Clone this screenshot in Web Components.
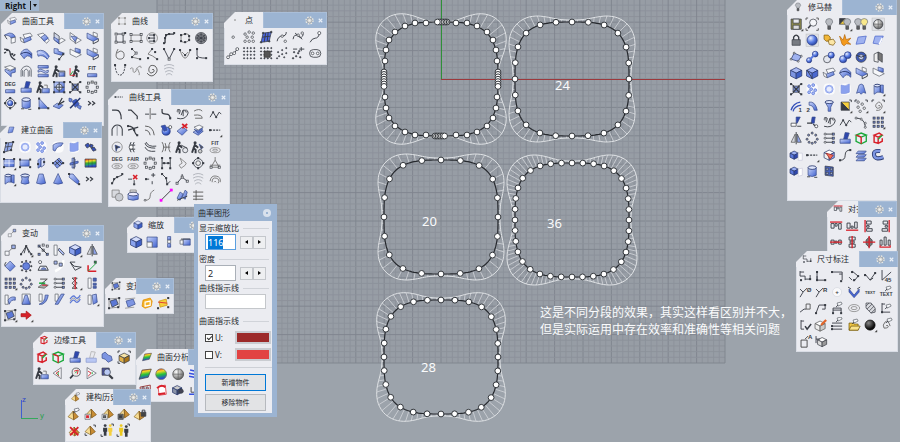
<!DOCTYPE html>
<html lang="zh-CN">
<head>
<meta charset="utf-8">
<title>Right</title>
<style>
html, body { height: 100%; margin: 0; }
body { background: #9ca3ab; font: 8px/12px "Noto Sans", "Noto Sans CJK SC", sans-serif; color: #25282d; overflow: hidden; }
</style>
</head>
<body>
<modeling-desktop>
  <view-tab slot="tab">Right</view-tab>
  <curve-view></curve-view>
  <view-note style="left:555px;top:76px">24</view-note>
  <view-note style="left:422px;top:212px">20</view-note>
  <view-note style="left:547px;top:214px">36</view-note>
  <view-note style="left:421px;top:358px">28</view-note>
  <view-note class="cn" style="left:540px;top:303px">这是不同分段的效果，其实这样看区别并不大，<br>但是实际运用中存在效率和准确性等相关问题</view-note>

  <tool-panel style="left:1px;top:13px;width:103px;--foot:13px" icon="chamfer" tools="fillet chamfer blend lsheet lsheet2 chair curveNodes fan fan2 chairDot chairGrey chair cubeFillet arch waves manTable manAxes fitBar degBar ledge manBox target xTarget ringNodes orbit cylinder setSquare planeDrop satellite more">曲面工具</tool-panel>
  <tool-panel style="left:0;top:122px;width:102px;--foot:14px" icon="patchSmall" tools="patch glowBall glowDots glowBend glowSheet diamonds rectPatch* rectDots foldPatch gridPatch crossPatch rainbow extrude* loft cone1 cone2 sweep more">建立曲面</tool-panel>
  <tool-panel style="left:111px;top:13px;width:102px" icon="polyRectG" tools="polyRect rectOpen spiralSq filletNodes arcNodes ballDark blob curveN1 curveN2 parab parabDots lcurve catenary wavesSmall spiral springs">曲线</tool-panel>
  <tool-panel style="left:224px;top:12px;width:103px;--tab:39px" icon="dot" tools="point manyPoints pointGrid ptCurve ptCurve2 ptCurve3 ptLine dotGrid dotGrid2 dotScatter dotCross twoEyes">点</tool-panel>
  <tool-panel style="left:108px;top:89px;width:122px;--cols:7;--side:6px" icon="dashLine" tools="filletArc chamferArc crossLine connect squig hook wiggle arch2 tangent offset bluePot redX blueLay dashLine* circArrow bead strands mirrorB manCircle manCircle2 fitRings degRings fairRings ringNodes bridge loopG orbit2 bag stepNodes delNode plusNode bendNode tripod springs rings union ringBase sCurve magenta blueTiles rails">曲线工具</tool-panel>
  <tool-panel style="left:1px;top:225px;width:103px" icon="move" tools="move copyA* array scaleBar cube* mirror rotate spin projectC softArc shear axes gridNine* circNodes flatten alignR twist* alignB bendL taper shearB shearC flowG copyT* cage* redArrow*">变动</tool-panel>
  <tool-panel style="left:127px;top:217px;width:84px;--cols:4;--side:17px" icon="cube" tools="cube scale2 scale1 scaleN">缩放</tool-panel>
  <tool-panel style="left:105px;top:278px;width:69px;--cols:4;--side:2px;--tab:31px" icon="cage" tools="cage cageBlue cageOr cageYel">变形</tool-panel>
  <tool-panel style="left:33px;top:332px;width:103px" icon="edgeR" tools="edgeR edgeG ledge ledge2 mergeB goldBox manBox triL zoomRG triR magnify">边缘工具</tool-panel>
  <tool-panel style="left:136px;top:349px;width:103px;--tab:52px" icon="rainbowTilt" tools="rainbowTilt rainbowBall greyBall stripes blank blank dots redSheet greyCyl uLine">曲面分析</tool-panel>
  <tool-panel style="left:65px;top:389px;width:86px;--cols:5;--side:2px;--tab:48px" icon="pyrTag" tools="pyrTag pyrRed pyrDark pyrBlack pyrLock pyrX pyrPick twoMen twoMen2">建构历史</tool-panel>
  <tool-panel style="right:3px;top:-1px;width:110px;--side:10px;--foot:21px" icon="bulb" tools="save* zoomExt bulb bulbHalf* bulbTwo ballDisplay lock ballBlue puzzle explode sheetB sheetTrim sheetDots linkBalls diffBalls uniBalls ringCube extrDark cubeB cubeB2 chamfer fan chair chairGrey xTarget glowDots glowBall glowSheet cone3 extrude* curve1 curve2 funnel halfBlack* dotsSel* spiralSel* trimB splitB squig wiggle filletR gridNine* mirror circNodes alignR ledge edgeG edgeR boxFade dashLine* redOrb sCurve2 layers pipe boxFade2 cylinder cubeHole">修马赫</tool-panel>
  <tool-panel style="right:3px;top:201px;width:70px;--cols:4;--side:3px;--tab:31px" icon="alT" tools="alT alBt alL alR alH alV alC alD">对齐</tool-panel>
  <tool-panel style="right:2px;top:251px;width:102px" icon="dim1" tools="dim1 dimV dimH dimA dimA2 dim45 dimO dimR dimC dimBlue txt txtLead leader leader2 leadTag cloud hatch dimTag dimCheck cubePen dimList folder ballBlack* spiralTag tagA tagCube">尺寸标注</tool-panel>
  <axis-mark></axis-mark>
  <curvature-dialog style="left:194px;top:204px"></curvature-dialog>
</modeling-desktop>

<script>
/* ---------- icon library: every glyph sits in a 16 x 16 box ---------- */
const K = '#383c44';
const p = (d, c = K, w = .9) => `<path d="${d}" fill="none" stroke="${c}" stroke-width="${w}"/>`;
const f = (d, c = 'url(#b)', s = '#3a4d8c') => `<path d="${d}" fill="${c}" stroke="${s}" stroke-width=".7" stroke-linejoin="round"/>`;
const w = d => f(d, '#f6f7fa', '#5f646c');
const pts = s => s.split(',').map(v => v.trim().split(' ').map(Number));
const n = (s, c = '#fff', k = K) => pts(s).map(([x, y]) => `<rect x="${x - 1}" y="${y - 1}" width="2" height="2" fill="${c}" stroke="${k}" stroke-width=".7"/>`).join('');
const nd = s => pts(s).map(([x, y]) => `<rect x="${x - 1}" y="${y - 1}" width="2" height="2" fill="${K}"/>`).join('');
const o = (s, r = 1.3, c = '#fff', k = K) => pts(s).map(([x, y]) => `<circle cx="${x}" cy="${y}" r="${r}" fill="${c}" stroke="${k}" stroke-width=".7"/>`).join('');
const el = (x, y, a, b, c = 'none', k = K) => `<ellipse cx="${x}" cy="${y}" rx="${a}" ry="${b}" fill="${c}" stroke="${k}" stroke-width=".8"/>`;
const t = (s, x = 8, y = 7, z = 5) => `<text x="${x}" y="${y}" font-size="${z}" text-anchor="middle" fill="${K}">${s}</text>`;
const R = '#d8202a', G = '#18a838', Y = '#f6cf3c';
const ball = (x, y, r, c = 'url(#s)') => o(`${x} ${y}`, r, c, '#2a3c86');
const cub = (x, y, s, A = '#d3dcfa', B = '#8aa3ee', C = '#3f5fc4', k = '#26356b') => {
  const h = s / 2, q = s / 4;
  return f(`M${x - h} ${y - q}L${x} ${y - h} ${x + h} ${y - q} ${x} ${y}Z`, A, k) + f(`M${x - h} ${y - q}L${x} ${y}V${y + h}L${x - h} ${y + q}Z`, B, k) + f(`M${x} ${y}L${x + h} ${y - q}V${y + q}L${x} ${y + h}Z`, C, k);
};
const man = (x = 0, c = K) => `<g transform="translate(${x} 0)"><circle cx="6" cy="3.6" r="1.5" fill="${c}"/>${p('M6 5L4.5 9 6.5 10.5V14M4.5 9L3 13.5M6 6L9 8.5', c, 1.9)}</g>`;
const stand = (x, c, y = 0) => `<g transform="translate(${x} ${y})"><circle cx="0" cy="3.5" r="1.4" fill="${c}"/><path d="M-2 5.500H2V9.500H1.300V13.500H-1.300V9.500H-2Z" fill="${c}"/></g>`;
const bar = f('M3.500 10.500H12.500V13.500H3.500Z');
const chairA = f('M3 3V8L9 11 14 8.500 9 6Z') + w('M9 2L13 3.500V7L9 5.500Z') + p('M9 11V13.500L14 11V8.500');
const pyr = (x = 0, y = 0) => `<g transform="translate(${x} ${y})">${f('M8 5L3 10.500 8.500 13.500Z', '#f7dc93', '#8a6a2a')}${f('M8 5L13 10.500 8.500 13.500Z', '#c98d34', '#7a5418')}</g>`;
const rainb = d => f(d, 'url(#r)', '#444');
const glow = s => `<g><rect x="2.500" y="2.500" width="11" height="11" rx="4" fill="#fff" opacity=".8"/>${s}</g>`;
const bulb = (x, c = '#b9bcc2') => f(`M${x - 3.5} 6A3.500 3.500 0 1 1 ${x + 3.5} 6Q${x + 2} 8 ${x + 1.5} 9.500H${x - 1.5}Q${x - 2} 8 ${x - 3.5} 6Z`, c, '#73777e') + f(`M${x - 1.3} 10H${x + 1.3}V13H${x - 1.3}Z`, '#5b5f66', '#444');
const brackets = p('M2 4V2H4M12 2H14V4M2 12V14H4', K);
const tag = (x, y) => `<g transform="translate(${x} ${y})">${w('M1 1L5 0 6 2 2 4Z')}${p('M0 5L2 3')}</g>`;
const orbit = el(8, 8, 4.5, 4.5, 'none') + nd('8 3,8 13,3 8,13 8');
function row4(y) { return o(`3 ${y},6.300 ${y},9.600 ${y},13 ${y}`, .6, K); }

const icons = {
  blank: '', more: p('M4 6L6.500 8 4 10M8 6L10.500 8 8 10', K, 1.200), dot: o('8 8', .8, '#aaa', '#888'),
  fillet: f('M2.500 5 7 3Q12 3 13 7L9 8Q8 5 2.500 5Z') + w('M9 8 13 7V12L9 13Z') + p('M2.500 5Q4 8 5 9'),
  chamfer: w('M5 4.500L12 3 14 6 7 8.500Z') + f('M5 9L12 6.500 13 9.500 6 12.500Z') + w('M2 7L5 9 6 12.500 3 11Z'),
  blend: w('M2.500 4.500L8 3 14 10 11.500 13Z') + f('M6 7L10 4.500 13 8 9 11Z'),
  lsheet: f('M3 2.500L8 6V13.500L3 9.500Z', '#cfd5e6', K) + f('M3 7L8 10V13.500L3 9.500Z') + w('M8 13.500L14 10 10.500 8 8 9.500Z'),
  lsheet2: w('M3 2.500L8 6V12.500L3 9Z') + f('M4 6L10 7 8.500 12Z') + w('M8 13.500L14 10 10.500 8 9 9.500Z'),
  chair: chairA, chairDot: f('M3 2.500V7L10 9 13 7 7 5V3Z') + nd('12 8,8 13') + p('M12 8L8 13'), chairGrey: w('M3 3V8L9 11 14 8.500 9 6Z') + f('M8 2L13 3.500V7L8 5.500Z'),
  curveNodes: p('M2 3Q8 3 8 7T13 13.500M4 6L2 7M11 10L13 8', K, 1.300) + nd('5 4,10 8'),
  fan: f('M2.500 8Q4 3 9 3L13.500 7V12Q9 7 6 12.500Z') + p('M2.500 8Q8 4 13.500 9', '#26356b'),
  fan2: f('M2 5Q9 2 14 10L12 13Q8 8 3 10Z') + p('M2 7Q9 5 13 12', '#d7defa'),
  cubeFillet: w('M2.500 4L8 2.500 13.500 5 8 7Z') + f('M3 6L8 8 13 5.500V9L9 10V13.500L3 8Z'),
  arch: p('M3 13.500V7Q5 3 8 3Q12 3 13 7V13.500M6 13.500V8Q8 4 10 8V13.500M4.500 13V7M11.500 13V7', '#6b707a', .9),
  arch2: p('M3 13.500V7Q5 3 8 3Q12 3 13 7V13.500', K, 1) + p('M8 3V13.500', '#8a8f98'),
  waves: f('M3 2.500H13V5H3Z') + f('M3 7Q6 5 8 7T13 7V9Q10 11 8 9T3 9Z', '#b9c7f4') + f('M3 11H13V13.500H3Z'),
  manTable: man(-1) + p('M8 8H13.500V13.500M8 13.500V10') + f('M8 9.500H13V13H8Z'),
  manBox: man(-1) + f('M7 9.500H14V13.500H7Z') + p('M9 6H12V9', '#777'),
  manAxes: man(3) + p('M3 5V12H8', R) + p('M3 12L6 8', G),
  manCircle: man(-1) + o('11 11', 2.5, '#e5e7ec') + p('M7 6L13 9'), manCircle2: man(-1) + o('10 12', 1.8, '#ccc') + f('M9 5L13 8 11 10Z', '#555'),
  fitBar: t('FIT') + bar, degBar: t('DEG') + bar,
  fitRings: t('FIT', 8, 6, 5) + el(8, 11, 5, 2.5, 'none', '#888') + el(8, 11, 2.5, 1, 'none', '#888'),
  degRings: t('DEG', 8, 6, 5) + el(8, 11, 5, 2.5, 'none', '#888') + el(8, 11, 2.5, 1, 'none', '#888'),
  fairRings: t('FAIR', 8, 6, 5) + el(8, 11, 5, 2.5, 'none', '#888') + el(8, 11, 2.5, 1, 'none', '#888'),
  ledge: f('M8 2.500L12 3 10 9H6.500Z', '#2e47ae') + f('M3 9H13V13H3Z'), ledge2: f('M8 2.500L12 3 10 9H6.500Z', '#e8e9ee', '#aaa') + f('M3 9H13V13H3Z', '#b9c7f4', '#8c9bd0'),
  target: f('M3 3H13V13H3Z') + o('8 8', 3, '#dfe6fc') + p('M8 3V13M3 8H13') + nd('3 3,13 3,3 13,13 13'),
  xTarget: p('M3 3L6 5M13 3L10 5M3 13L6 11M13 13L10 11') + f('M5 5H11V11H5Z', '#7d94dc', K) + p('M5 5L11 11M11 5L5 11', K, 1.300) + nd('3 3,13 3,3 13,13 13'),
  ringNodes: n('8 3,4.500 4,11.500 4,3 8,13 8,4.500 12,11.500 12,8 13') + p('M6 4Q8 2 10 4', '#888'),
  orbit: orbit + ball(8, 8, 2.6), orbit2: orbit + o('8 8', 2.3, '#eee'),
  cylinder: f('M4 4.500V12Q8 14.500 12 12V4.500Z') + el(8, 4.5, 4, 1.8, '#dfe6fc', '#26356b') + p('M3 13.500H6M10 14H13'),
  setSquare: f('M4 3.500V13H13Z') + nd('4 3.500,4 13,13 13'),
  planeDrop: f('M2 11L6 8 12 10 8 13.500Z') + p('M7 10L11 3M8 9L13 6', K, 1.200),
  satellite: f('M5 6L9 4 12 9 8 12Z', '#3c59c4') + f('M2 3L5 4 4 7 2 6Z', '#6d88e0') + f('M11 10L14 11 13 14 10 12Z', '#6d88e0') + p('M3 13L13 3', '#26356b', 1.500),
  patch: f('M5 4L12 3 10 11 3 13Z', '#93a8ea', K) + p('M7.500 4L6 12M4 8L11 7', K, .7) + nd('5 4,12 3,10 11,3 13'),
  patchSmall: f('M6 4L12 4 10 11 4 12Z'),
  glowBall: glow(o('8 8', 3.8, '#e8edfd', '#6f8ae6') + o('8 8', 3, 'none', '#88a0f0')),
  glowDots: glow(o('5 5,9 4,7 8,11 9,5 11,9 12', 1.4, '#a9bbf4', '#5a76d8')),
  glowBend: glow(f('M3 6Q7 3 13 4L11 7Q7 7 5 12L3 11Z')), glowSheet: glow(f('M4 4Q8 6 12 3L12 11Q8 13 4 12Z', '#8ba1ee', '#7f95e0')),
  diamonds: f('M3 6L6 4 8 7 5 9ZM8 5L11 6 10 9 8 8ZM9 9L12 8 14 11 11 12Z', '#3550b8', K),
  rectPatch: f('M3 4.500H13V11.500H3Z') + p('M8 4.500V11.500M3 8H13', '#fff', .7) + nd('3 4,13 4,3 12'),
  rectDots: f('M3 5H12V11H3Z') + nd('3 4.500,13 4.500,3 12,13 12'),
  foldPatch: f('M5 5L8 3V11L5 13Z') + f('M8 5L11 3V10L8 12Z', '#dbe3fc') + nd('5 9,11 7'),
  gridPatch: f('M3 8L9 3 13 8 7 13Z', '#7d95e2') + p('M5 6L10 11M7 4L12 9M5 10L11 5') + nd('3 8,13 8'),
  crossPatch: f('M6 3L9 4V12L6 13Z', '#a9b9ee') + f('M4 8L12 6V8L4 10Z', '#5f7ad6') + p('M8 2V14'),
  rainbow: rainb('M3 4H14V12H3Z') + p('M3 8H14M6.500 4V12M10 4V12', '#3338', .6),
  extrude: f('M4 5Q7 2 10 4L13 4V12L10 11Q7 10 4 13Z') + p('M10 4V11', '#26356b') + el(7, 4.5, 3, 1.3, '#dfe6fc', '#26356b'),
  loft: f('M4 4Q8 2 12 4L11 8 12 12Q8 14 4 12L5 8Z') + el(8, 4.5, 4, 1.5, '#dfe6fc', '#26356b'),
  cone1: f('M6 3H10L12.500 12Q8 14 3.500 12Z'), cone2: f('M8 2.500L12.500 12Q8 14 3.500 12Z'), cone3: f('M6 4Q8 2 10 4L12.500 12 10 11 8 13 6 11 3.500 12Z'),
  sweep: f('M4 3L7 3 13 10 12 13 9 11 3 6Z') + nd('13 13,3 3'),
  polyRect: p('M4 4H11V12H4V6', K) + n('4 4,11 4,4 12,12 12') + nd('13 3'), polyRectG: p('M4 4H12V12H4Z', '#999', .7) + n('4 4,12 4,4 12,12 12', '#fff', '#888'),
  rectOpen: p('M3 5H13V11H3Z', '#777') + n('3 4.500,13 4.500,3 11.500,13 11.500'),
  spiralSq: o('8 8', 5.3, 'none', '#777') + p('M5 5H10V11H5M6 8H11', K) + nd('10 5,10 11,5 8'),
  filletNodes: p('M4 13V10Q4 4 8 4H13', K, 1.300) + nd('13 3,8 4,4 8,3 13,5 5'),
  arcNodes: p('M4 11V6Q8 2 12 5V10Q8 14 4 11', '#777') + nd('4 5,8 4,12 6,12 10,8 12,4 11'),
  ballDark: o('8 8', 5.5, '#8b8e94') + p('M3 8H13M8 3V13M4 5L12 11M12 5L4 11', K, .8) + o('8 8', 3.5, 'none'),
  blob: p('M6 3Q4 6 4 9Q4 13 8 13Q12 13 12 9Q12 5 8 5L5 7', '#666'),
  curveN1: p('M4 3L8 7 4 11 12 13', '#777') + nd('4 3,4 11,12 13') + n('8 7'), curveN2: p('M8 3L4 8Q8 9 13 13', '#777') + nd('8 3,11 6,4 12,13 13'),
  parab: p('M3 3L8 13 13 3') + nd('3 3,13 3') + n('8 13'), parabDots: p('M3 4Q8 20 13 4M5 6L8 9 11 6', '#777') + nd('3 4,8 9,13 4'),
  lcurve: p('M4 3V9Q4 12 13 12') + nd('4 3,4 12,13 12'),
  catenary: `<g stroke-dasharray="2 1">${p('M3 3Q4 13 8 13T13 3')}</g>` + nd('3 3,13 3'),
  wavesSmall: p('M2 7Q5 4 5 8T8 9Q8 4 10 8T11 13M9 6Q13 2 13 6', '#888'),
  spiral: p('M8 8Q9 6 10 8T7 11Q4 10 5 6T11 4Q15 8 11 12T3 11', '#555'),
  springs: p('M3 4Q8 1 13 4M3 7Q8 4 13 7M4 10Q8 7 12 10M5 13Q8 10 11 13', '#a6aab2', .8),
  point: o('8 8', 1.2), manyPoints: o('4 5,8 3,12 4,6 8,11 8,4 12,8 12,12 12', 1.2),
  pointGrid: f('M5 4L13 3 11 12 3 13Z', '#4a66e0', K) + p('M7.500 4L6 13M10 3L9 12M4 8L12 7') + o('5 4,13 3,11 12,3 13', .8, K),
  ptCurve: p('M3 12Q4 7 8 7T12 3') + o('8 7,11 12', 1.2), ptCurve2: p('M3 10Q4 4 8 7T13 5M5 4L12 10') + o('8 6,12 4', 1.2), ptCurve3: p('M3 13Q5 9 8 9T12 5') + o('12 4', 1.5),
  ptLine: p('M3 12L6 9 9 8 12 4') + o('3 12,6 9,9 8,12 4', 1.4),
  dotGrid: [3, 6.3, 9.6, 13].map(row4).join(''), dotGrid2: [3, 6.3, 9.6, 13].map(row4).join('') + f('M6 6H12V12H6Z', '#555', '#333'),
  dotScatter: o('4 7,8 5,12 3,5 11,8 9,10 12,3 13,12 8', .6, K), dotCross: o('4 7,8 8,6 11,10 12,3 13,9 6', .7, K) + p('M3 4H7M9 4H14M11 2V6'),
  twoEyes: `<rect x="2.500" y="4.500" width="11" height="7.500" rx="3.700" fill="none" stroke="${K}" stroke-width=".8"/>` + o('5.500 8.200,10.500 8.200', 1.3),
  filletArc: p('M3 4H7Q12 4 12 13', K, 1.200), chamferArc: p('M3 4H6L12 10V13', K, 1.200), crossLine: p('M3 8H7M9 8H14', K) + p('M8 2V13', '#666'), connect: p('M4 3V6Q4 8 8 8T12 13', K, 1.200) + nd('12 12'),
  squig: p('M3 12Q10 14 13 9T9 4L7 9M3 4Q8 2 5 8M9 4V10') + o('4 5,12 5', 1, '#fff'),
  hook: p('M4 5Q9 2 12 5M4 9Q12 8 12 12H5', '#666'), wiggle: p('M3 11L6 6 9 11 12 6 14 8') + o('6 6,9 11', .7, K),
  tangent: p('M3 4Q8 4 9 8T12 13M3 8L13 5', K, 1.100) + nd('3 4,9 8,12 13'), offset: p('M3 4Q11 4 12 13M3 8Q7 8 8 13', '#555'),
  bluePot: ball(8, 9, 4) + f('M3 4L7 3 9 8 6 9Z', '#3550b8') + o('12 5', 1.5), redX: f('M3 9L8 5 13 8 8 13Z') + p('M8 2L13 6M13 2L8 6', R, 1.800),
  blueLay: f('M3 10L8 7 13 9 8 13Z') + w('M4 5L9 3 13 5 8 8Z') + f('M4 7L8 9 12 6 12 8 8 11Z', '#5b78dc'),
  dashLine: `<g stroke-dasharray="2 1">${p('M3 8H13', K, 1.200)}</g>` + nd('3 8'),
  circArrow: o('8 8', 5, 'none', '#777') + f('M6 6L11 8 8 9 7 12Z', K), bead: p('M6 3Q3 8 6 13M9 3Q6 8 9 13M5 6H10M5 10H10') + o('6 8', 2), strands: p('M3 4Q4 9 13 9M4 3Q6 8 14 7M3 8Q5 13 13 12'), mirrorB: p('M4 3Q7 8 4 13M12 3Q9 8 12 13M7 4Q9 8 7 12M5 8H12', '#666'),
  bridge: p('M4 3V13M12 3V13M4 8H12') + nd('4 3,4 13,12 3,12 13,6 8,10 8'), loopG: p('M6 3L12 8 11 10 7 13 5 10 8 8Z', '#888'), bag: p('M8 2V5M8 5L4 12H12L8 5M3 10H13', '#777') + n('4 12,12 12'),
  stepNodes: p('M3 13L5 8 8 6 13 4') + nd('3 12,5 8,8 6,13 3'), delNode: p('M3 8H7M9 12V9') + nd('9 13') + p('M8 4L12 8M12 4L8 8', R, 1.500), plusNode: p('M3 8H7M11 2V6M9 4H13M10 13V10') + nd('4 8'), bendNode: p('M4 3L8 7 9 13M12 10L9 13') + nd('4 3,8 7,9 13'), tripod: p('M3 12L8 6 13 10M8 6V3') + n('3 12,8 6,13 10'),
  rings: p('M3 10Q4 4 9 5T13 11M5 11Q5 6 9 7T11 12M7 11Q8 9 9 11', '#777'),
  union: f('M3 3H10V10H3Z', '#d8dadf', '#777') + o('10 10', 3.8, '#c9ccd2', '#777'), ringBase: f('M3 7L13 7V12Q8 14 3 12Z') + el(8, 7, 5, 1.8, '#eef', '#26356b') + p('M5 3H11V5H5Z', '#888'), sCurve: p('M3 13Q8 13 8 9T12 3', '#777') + o('3 13', .9), sCurve2: p('M3 13Q8 13 8 8T13 3') + nd('3 13,13 3'),
  magenta: p('M3 13L13 3', '#333', .9) + n('3 13,13 3', '#f0f', '#f0f'), blueTiles: f('M3 11L6 5 9 7 6 13Z') + f('M8 10L11 3 13 5 11 12Z') + p('M3 13L13 9'), rails: p('M6 3V13M3 5H13M3 9H13M3 12H13', '#555'),
  move: w('M3 9H7V13H3Z') + f('M9.500 3H13V6.500H9.500Z', '#9db0ea', K) + p('M7 9L9.500 6.500', '#777'), copyA: p('M8 4L3 12M8 4L13 12M8 4L6 11M8 4L11 11') + nd('8 4,3 12,13 12'),
  array: n('4 4,4 12,12 12', '#7d95e2') + n('8 8,12 4,8 3') + p('M4 4L12 12'), scaleBar: w('M3 3H6V13H3Z') + f('M8 6L13 11 12 13 7 8Z', '#a9b9ee', K), cube: cub(8, 8, 11), mirror: f('M3 12L7 4V12Z', '#d6d9e0', '#555') + f('M9 4L13 12H9Z', '#8ea4ea', '#444') + p('M8 2V14', K),
  rotate: f('M3 8L8 3 13 8 8 13Z') + p('M4 4Q2 6 3 8'), spin: ball(8, 8, 3.5, '#6681dc') + o('4 4,12 4,3 8,13 8,4 12,12 12,8 3,8 13', .7, K), projectC: p('M3 12H13L11 8H5Z') + o('5 4', 1.5) + f('M6 11Q8 8 11 11Z'), softArc: p('M12 2Q13 9 4 13', '#fff', 2.500) + f('M3 3H6V6H3ZM8 5H11V8H8Z', '#a9b9ee', K),
  shear: p('M3 4L8 12 14 9 7 8Z') + p('M3 4H8'), axes: p('M4 13V7M4 13H12', R, 1.500) + p('M4 13L12 5', G) + n('11 4', G),
  gridNine: [4, 8, 12].map(y => n(`4 ${y},8 ${y},12 ${y}`, '#6f87dc')).join(''), circNodes: o('8 3,4.500 5,11.500 5,3 9,13 9,5 12,11 12,8 13', 1, '#8fa4ea', '#333'),
  flatten: f('M3 12L7 9 13 10 9 13Z', '#aaa', '#555') + p('M4 8H10', G, 1.500) + p('M5 4H12L7 8', '#444') + p('M7 10H12', R), alignR: p('M4 4H12M4 8H12M4 12H12') + n('12 4,12 8,12 12', '#7d95e2') + o('4 4,4 8,4 12', 1),
  twist: p('M5 3H10L5 8 10 13H5L10 8Z', '#444') + p('M8 2V14', R, 1.200), alignB: w('M4 3H7V13H4Z') + f('M9 3H12V6H9ZM9 8H12V10H9ZM9 11H12V13H9Z', '#4a63b4'), bendL: w('M3 4H6V13H3Z') + f('M6 9Q8 5 13 6V9Q9 8 7 13Z'), taper: w('M4 3H12V13H4Z') + f('M7 4H9L12 13H4Z'),
  shearB: w('M4 3H7V10H4Z') + f('M10 4H13Q12 11 7 13H4Q10 11 10 4Z'), shearC: w('M4 3H7V10H4Z') + f('M10 3H13L7 13H4Z'), flowG: p('M3 8Q6 3 8 6T13 4M3 12Q6 7 8 10T13 8', '#5f7ad6', 1.300) + p('M3 10Q6 5 8 8T13 6', '#999'), copyT: w('M4 4H7V13H4Z') + f('M8 4L12 3 13 11 9 13Z'),
  cage: f('M4 6L10 4 12 9 6 12Z', '#5c78d4', K) + p('M3 4L13 3M3 13L12 12M3 4V13M13 3V12', '#777', .7) + nd('3 4,13 3,3 13,12 12'), cageBlue: f('M4 6L11 4 13 9 6 12Z', '#7d95e2') + p('M3 4L13 3M3 13L12 12', '#999'),
  cageOr: f('M4 5L11 3 13 6 12 11 6 13 3 11Z', '#f4b224', '#e08a00') + p('M6 7L11 6V10L6 11Z', '#fff', 1.200), cageYel: f('M4 6L11 4 12 10 5 12Z', Y, '#c79514') + p('M3 7L12 8', '#d33') + nd('13 3,3 13,13 12'),
  redArrow: f('M3 6.500H8V4L13 8 8 12V9.500H3Z', R, '#a11'), scale2: f('M3 3H13V13H8V8H3Z') + w('M3 8H8V13H3Z'), scale1: f('M6.500 2.500H9.500V6H6.500Z') + w('M6.500 6H9.500V9H6.500Z') + f('M6.500 9.500H9.500V13H6.500Z'), scaleN: f('M6 5H13V11H6Z') + w('M3 6H6V10H3Z') + p('M4 5H13'),
  edgeR: p('M4 5L9 3 12 5 8 7ZM4 5V12L8 13V7M8 13L12 11V8', R, 1.400) + p('M8 9L12 5', G, 1.200), edgeG: p('M3 5L8 3 13 5 8 7ZM3 5V11L8 13.500 13 11V5', G, 1.300) + p('M8 7V13.500M3 5L8 7', R, 1.400),
  mergeB: f('M3 5L6 3 9 6 12 7 13 11 9 13 6 10 3 9Z', '#7d95e2'), goldBox: cub(8, 9, 10, '#f6e3a6', '#e0b04a', '#a87418', K) + brackets, triL: w('M11 2.500V13.500L3 8Z') + p('M9 6L6 8 9 11', R) + p('M8 7V10', G), triR: w('M4 2.500V13.500L13 8Z') + p('M5 6L8 8 5 11', R) + p('M9 7V9', G),
  zoomRG: o('9 7', 4, '#eee') + p('M7 6L11 5 10 9', R) + p('M8 8L10 6', G) + p('M6 10L3 13', K, 1.800), magnify: f('M3 3H10V10H3Z', '#4a50a0', K) + o('8 7', 3.2, '#b9c9f4') + p('M10 10L13.500 13.500', K, 2.200),
  rainbowTilt: rainb('M5 4L14 3 11 11 2 13Z'), rainbowBall: o('8 8', 5.3, 'url(#r)', '#666'), greyBall: o('8 8', 5.3, 'url(#k)', '#444') + p('M3 8H13M8 3V13', '#555', .6), stripes: p('M4 4L14 6M3 7L13 9M3 10L13 12', '#3550e0', 1.500),
  dots: p('M3 5L13 3V12L4 13Z', '#933') + o('6 6,10 6,8 10', 1.2, '#e9a'), redSheet: f('M5 5L12 3 13 12 6 13Z', '#fff', R) + p('M4 6Q8 2 12 5M5 12L12 11', R, 2), greyCyl: cub(7, 8, 9, '#ccc', '#8a93a8', '#3c4660') + o('11 9', 2, '#445'), uLine: p('M3 12H13', '#3550e0', 1.500) + p('M5 5V10H9V4', '#444'),
  pyrTag: pyr(-1) + tag(7, 2), pyrRed: pyr(1, -2) + w('M3 8H8V13H3Z') + n('5.500 10.500', R, R), pyrDark: pyr(1, -2) + w('M3 8H8V13H3Z') + n('5.500 10.500', '#666'), pyrBlack: pyr(1, -2) + f('M3 8H8V13H3Z', '#777', K) + n('5.500 10.500', K), pyrLock: pyr(-1, 0) + f('M9 6H13.500V10H9Z', '#444', K) + p('M10 6V4H12.500V6'),
  pyrX: pyr() + p('M4 5L12 13M12 5L4 13', R, 1.800), pyrPick: pyr(0, -1) + p('M3 11V13H5M11 3H13V5'), twoMen: stand(6, K) + stand(11, Y) + p('M2 12V14H4M12 2H14V4'), twoMen2: stand(6, '#ecc81e') + stand(11, K, 1) + p('M2 12V14H4M12 2H14V4'),
  bulb: bulb(8), bulbHalf: f('M2.500 2.500H8L2.500 8Z', K, K) + f('M8 2.500V8H2.500Z', Y, K) + bulb(10), bulbTwo: bulb(5) + bulb(11, '#f8e88c'), save: f('M3 3H13V13H3Z', '#8d8a4a', K) + f('M5 3H11V7H5Z', '#e8e9ec', K) + f('M5 9H11V13H5Z', '#ddd', K), zoomExt: o('9 6.500', 3.5, '#f5f6f9') + p('M6.500 9L4 12', K, 1.500) + p('M2 4V2H4M12 2H14V4M2 12V14H4M12 14H14V12', '#555'),
  ballDisplay: `<rect x="2" y="2" width="12" height="12" fill="#dfe1e6" stroke="#bbb" stroke-width=".5"/>` + o('8 8', 4.6, 'url(#k)') + p('M8 3V13M3.500 8H12.500', '#555', .6), lock: p('M5.500 8V5Q8 1 10.500 5V8', K, 1.300) + f('M4 7.500H12V13H4Z', '#777b82', K), ballBlue: `<rect x="2" y="2" width="12" height="12" fill="#dfe1e6" stroke="#bbb" stroke-width=".5"/>` + ball(8, 8, 5),
  puzzle: f('M3 3H7L9 5V9H5L3 7Z', '#f2b83a', '#805a10') + f('M7 8L12 7 14 10 12 13 8 12Z', '#fbe6a6', '#805a10'), explode: f('M2.500 4L6 8 7.500 2.500 9 7.500 13.500 6 10.500 9.500 13.500 12 9 11.500 7 13.500 5 12Z', '#f49a1c', '#b86a10'),
  sheetB: f('M5 5L13 4 11 11 3 12Z', '#9fb2f0', '#4c66c8'), sheetTrim: f('M5 4L13 4 11 9 9 12 3 11Z', '#9fb2f0', '#4c66c8') + p('M9 12L12 6', '#fff', 1.500), sheetDots: f('M6 4L13 7 10 12 3 10Z', '#9fb2f0', '#26356b') + o('6 4,13 7,10 12,3 10', .9),
  linkBalls: ball(5, 11, 2.5) + ball(11, 5, 2.8) + p('M6 10L10 6', '#5b78dc', 2), diffBalls: o('6 10', 3.5, '#e3e6ee') + ball(10, 6, 3), uniBalls: ball(6, 10, 3.5) + ball(10.5, 6, 3.3), ringCube: o('8 8', 5, '#3c59b8') + o('8 8', 2.5, '#c9d3f5') + p('M3 6L8 8 13 6', K), extrDark: f('M4 5L8 3V13L4 12Z', '#eee', K) + f('M8 3L12 5V13L8 10Z', '#777', K),
  cubeB: cub(8, 8, 11, '#aabaf2', '#7d95e2'), cubeB2: cub(8, 8, 11, '#9eb2f4', '#6f8ae6', '#4a68cf') + p('M3 5L8 13'), curve1: p('M3 12Q5 5 12 4M5 13Q6 8 13 7', '#3550b8', 1.300) + t('1', 12, 13.5, 6), curve2: f('M5 4Q11 3 13 12L10 12Q9 7 5 7Z') + t('2', 4, 13.5, 6), funnel: f('M4 4Q8 2 12 4L9.500 9V13L7 13V9Z') + el(8, 4, 4, 1.5, '#dfe6fc', '#26356b'),
  halfBlack: f('M4 4H12V12Z', Y, K) + f('M4 4V12H12Z', K, K) + p('M12 2H14V4'), dotsSel: o('5 4,9 6,5 9,11 10,7 13', 1.2) + p('M2 4V2H4M12 2H14V4'), spiralSel: p('M8 8Q9 6 10 8T7 10Q4 8 7 5T12 8Q11 13 6 12', '#777') + p('M2 4V2H4M12 2H14V4'),
  trimB: f('M8 3L12 3 9 9H8Z', '#2e47ae') + f('M3 9H8V12H3Z', '#fff', K) + p('M9 12H13'), splitB: f('M8 3L11 3 10 9H7Z', '#2e47ae') + p('M3 9H8M9 10L13 13', K, 1.300) + o('12 12', 1.5), filletR: p('M3 4Q11 4 12 12') + o('3 4,8 5,12 9,12 13', 1),
  boxFade: cub(6, 8, 8, '#9eb2f4', '#5b78dc', '#2e47ae') + f('M10 6H14V13H10Z', '#fafbfd', '#ccd'), boxFade2: cub(6, 8, 8, '#9eb2f4', '#5b78dc', '#2e47ae') + f('M10 6L14 5V12L10 13Z', '#fff', '#ccd'), redOrb: cub(8, 8, 10, '#fff', '#eee', '#8aa3ee') + f('M5 6L12 8 9 12Z', '#f2705a', '#922'), layers: f('M5 4H13L11 6.500H3Z') + f('M5 7.500H13L11 10H3Z') + f('M5 11H13L11 13.500H3Z'), pipe: p('M10 4Q3 3 4 8T13 10', '#26356b', 4) + p('M10 4Q3 3 4 8T13 10', '#7d95e2', 2.400), cubeHole: f('M4 3L12 4V13L4 12Z', '#4a66c8', K) + n('6 6,10 6,6 10,10 10', '#b9c7f4'),
  alT: p('M2 4H14', R, 1.300) + p('M3 5.500H6V10H3ZM7 5.500H9V8H7ZM10.500 5.500H13V11H10.500Z'), alBt: p('M2 12H14', R, 1.300) + p('M3 5H6V10H3ZM7 8H9V10H7ZM10.500 4H13V10H10.500Z'), alL: p('M4 2V14', R, 1.300) + p('M5.500 3H10V6H5.500ZM5.500 7.500H8V9H5.500ZM5.500 10.500H11V13H5.500Z'), alR: p('M12 2V14', R, 1.300) + p('M6 3H10.500V6H6ZM8 7.500H10.500V9H8ZM5 10.500H10.500V13H5Z'),
  alH: p('M3 6H6V10H3ZM7 7H9V9H7ZM10.500 6H13V10H10.500Z') + p('M2 8H14', R, 1.300), alV: p('M5 3H11V6H5ZM6 7H10V9H6ZM5 10H11V13H5Z') + p('M8 2V14', R, 1.300), alC: f('M8 3L11 6V10L8 13 5 10V6Z', '#777', K) + p('M2 8H14M8 2V14', R, 1.300), alD: p('M3 6H5V11H3ZM7 3H9V11H7ZM11 6H13V11H11Z') + p('M3 11V13H13V11', R, 1.200),
  dim1: p('M3 3V8H8V12M3 4H7M8 11H13V7', K) + nd('13 11,4 12'), dimV: p('M4 3V12H13M4 12L4 8') + nd('4 4,12 12,4 12'), dimH: p('M3 4H13V12M10 6H13') + nd('3 4,12 13'), dimA: p('M6 3L12 8 8 13M3 9L6 12') + nd('6 4,12 8,8 12'), dimA2: p('M3 6L8 12 13 5M8 12L11 10') + nd('3 7,13 5'), dim45: p('M4 2V12L13 4') + t('45', 10, 14, 6),
  dimO: p('M3 5L6 8 10 4M6 8L3 13') + t('Ø', 12, 8, 6), dimR: p('M3 5L6 8 10 4M6 8L3 13') + t('R', 12, 8, 6), dimC: o('8 8', 4.5, '#f8f8fa', '#d5d8de') + t('+', 8, 10, 6), dimBlue: f('M3 5L8 11 13 5 13 8 8 13.500 3 8Z', '#4565d8') + p('M2 3L5 5M14 3L11 5'), txt: t('TEXT', 8, 10, 4), txtLead: t('TEXT', 8, 12, 5) + tag(7, 2),
  leader: p('M3 12L7 9H9') + p('M9 4H13V9H9Z', '#555'), leader2: p('M3 13L6 5H12V9H9') + nd('3 13,12 5'), leadTag: p('M4 13V8H12V13M4 10H12') + tag(7, 2) + nd('4 13,12 13'), cloud: el(8, 8, 5.5, 3.5, 'none', '#888') + el(8, 8, 3, 1.5, 'none', '#888'), hatch: f('M4 3H9L13 8V12L9 13 4 8Z', '#d8dadf', K) + p('M4 6L7 3M5 9L10 4M7 11L12 6M9 13L13 9', K, .7), dimTag: p('M4 3V13M4 4H7M4 12H12') + tag(7, 4) + nd('4 12'),
  dimCheck: p('M4 3V12M4 4H7M4 12H7') + p('M8 9L10 12 14 7', K, 1.500), cubePen: cub(7, 9, 10, '#fff', '#eee', '#ccc', '#555') + p('M8 8L13 3', '#e2652a', 2.200), dimList: p('M3 6H13M3 9H13M3 12H13') + tag(7, 0) + nd('3 9,3 12'), folder: f('M3 6H7L8 7H12V13H3Z', '#f2c744', '#6a5208') + f('M5 9H14L12 13H3Z', '#fbe48c', '#6a5208') + tag(6, 2), ballBlack: o('8 8', 5, 'url(#d)', '#111'), spiralTag: p('M8 9Q9 7 10 9T6 11Q4 8 7 5T12 9', '#666') + tag(8, 1),
  tagA: p('M4 7H10V14H4ZM8 6L11 3', '#444') + t('A', 13, 6, 6), tagCube: cub(9, 9, 9, '#fff', '#ddd', '#999', K) + p('M3 3V10M3 6H7', K)
};

const defs = `<svg width="0" height="0" style="position:absolute"><defs>
<linearGradient id="b" x1="0" y1="0" x2="1" y2="1"><stop offset="0" stop-color="#ccd8fb"/><stop offset="1" stop-color="#3e60cf"/></linearGradient>
<radialGradient id="s" cx=".35" cy=".3" r=".8"><stop offset="0" stop-color="#eaf0ff"/><stop offset=".5" stop-color="#5b7ee6"/><stop offset="1" stop-color="#1b358f"/></radialGradient>
<radialGradient id="k" cx=".35" cy=".3" r=".8"><stop offset="0" stop-color="#fff"/><stop offset="1" stop-color="#555"/></radialGradient>
<radialGradient id="d" cx=".35" cy=".3" r=".6"><stop offset="0" stop-color="#888"/><stop offset="1" stop-color="#0c0c0c"/></radialGradient>
<linearGradient id="r" x1="0" y1="0" x2=".2" y2="1"><stop offset="0" stop-color="#e22"/><stop offset=".3" stop-color="#f6d624"/><stop offset=".6" stop-color="#25c23c"/><stop offset="1" stop-color="#2840e0"/></linearGradient>
</defs></svg>`;
const svg = (body) => `<svg viewBox="0 0 16 16" aria-hidden="true">${body}</svg>`;
const flyout = '<path d="M15 12.500V15H12.500Z" fill="#444"/>';

/* ---------- floating toolbox ---------- */
customElements.define('tool-panel', class extends HTMLElement {
  constructor() {
    super();
    const root = this.attachShadow({ mode: 'open' });
    const tools = this.getAttribute('tools').split(' ');
    root.innerHTML = `<style>
      :host { position: absolute; display: block; box-sizing: border-box; }
      header { display: flex; height: 16px; }
      .tab { display: flex; align-items: center; gap: 4px; flex: none; box-sizing: border-box; width: var(--tab, auto); overflow: hidden; white-space: nowrap;
        padding: 0 10px 0 5px; background: #ebecf1; clip-path: polygon(11px 0, 100% 0, 100% 100%, 0 100%, 0 11px); }
      .tab svg { width: 12px; height: 12px; flex: none; }
      h2 { margin: 0; font: inherit; }
      .bar { flex: 1; display: flex; align-items: center; justify-content: flex-end; gap: 3px; padding-right: 2px; background: #9cb4d2; border: 1px solid #aabed8; border-bottom: 0; min-width: 0; }
      .bar button { width: 7px; }
      .bar .gear { width: 9px; }
      button { all: unset; display: block; }
      svg { display: block; width: 100%; }
      .body { display: grid; grid-template-columns: repeat(var(--cols, 6), 1fr); padding: 1px var(--side, 3px) var(--foot, 2px) 0; background: #ebecf1; border: 1px solid #d9dde5; border-top: 0; }
      .body button { aspect-ratio: 1; }
      text { font-family: "Liberation Sans", sans-serif; font-weight: bold; }
    </style>${defs}
    <header><div class="tab">${svg(icons[this.getAttribute('icon')])}<h2><slot></slot></h2></div>
      <div class="bar"><button class="gear" aria-label="options">${svg(`<circle cx="8" cy="8" r="6" fill="none" stroke="#eceae4" stroke-width="3" stroke-dasharray="2.700 2"/><circle cx="8" cy="8" r="4.500" fill="#d4d6d6" stroke="#96989a" stroke-width="1.200"/><circle cx="8" cy="8" r="1.800" fill="#f4f2ec"/>`)}</button><button aria-label="close">${svg('<path d="M4 4L12 12M12 4L4 12" stroke="#e9eff7" stroke-width="2.500"/>')}</button></div></header>
    <div class="body">${tools.map(s => {
      const id = s.replace('*', '');
      return id === 'blank' ? '<span></span>' : `<button aria-label="${id}">${svg(icons[id] + (s.endsWith('*') ? flyout : ''))}</button>`;
    }).join('')}</div>`;
  }
});

/* ---------- construction grid, axes and curvature graphs ---------- */
customElements.define('curve-view', class extends HTMLElement {
  constructor() {
    super();
    const root = this.attachShadow({ mode: 'open' });
    const Rr = 57, N = 3.2;
    const at = a => {
      const c = Math.cos(a), s = Math.sin(a), k = Math.pow(Math.abs(c) ** N + Math.abs(s) ** N, -1 / N) * Rr;
      return [c * k, s * k];
    };
    const table = [];
    let len = 0, last = at(-Math.PI / 2);
    for (let i = 0; i <= 1440; i++) {
      const a = -Math.PI / 2 + i * Math.PI / 720, q = at(a);
      len += Math.hypot(q[0] - last[0], q[1] - last[1]);
      table.push([len, a]);
      last = q;
    }
    const even = count => Array.from({ length: count }, (_, i) => table.find(e => e[0] >= len * i / count - 1e-6)[1]);
    const comb = (a, base, amp) => {
      const [x, y] = at(a), [x1, y1] = at(a - .01), [x2, y2] = at(a + .01);
      const dx = x2 - x1, dy = y2 - y1, m = Math.hypot(dx, dy), h = base + amp * Math.abs(Math.sin(2 * a)) ** 3;
      return [x + dy / m * h, y - dx / m * h];
    };
    const P = q => q.map(v => v.toFixed(1)).join(' ');
    const line = fn => 'M' + Array.from({ length: 180 }, (_, i) => P(fn(-Math.PI / 2 + i * Math.PI / 90))).join('L') + 'Z';
    const dots = list => list.map(([x, y]) => `<circle cx="${x.toFixed(1)}" cy="${y.toFixed(1)}" r="2.900"/>`).join('');
    const figure = (cx, cy, count, teeth, base, amp, points) => `<g transform="translate(${cx} ${cy})" fill="none">
      <path d="${even(teeth).map(a => 'M' + P(at(a)) + 'L' + P(comb(a, base, amp))).join('')}" stroke="#d3d6da" stroke-width=".8"/>
      <path d="${line(a => comb(a, base, amp))}" stroke="#dfe2e5"/>
      <path d="${line(at)}" stroke="#26292e" stroke-width="1.200"/>
      <g fill="#fff" stroke="#33373c">${dots(points || even(count).map(at))}</g></g>`;
    const dense = [];
    for (const [x, y] of [[15, 56], [26, 56], [36, 53], [46, 47], [52, 39], [55, 29], [56, 18]]) dense.push([x, y], [-x, y], [x, -y], [-x, -y]);
    for (let i = 0; i < 7; i++) dense.push([-57, -7 + i * 2.4], [57, -7 + i * 2.4], [6 - i * 1.6, -57], [-6 + i * 1.6, 57]);
    let grid = '';
    for (let i = -50; i <= 50; i++) {
      const s = i % 5 ? '#8c929a' : '#7f858d';
      grid += `<path d="M${i} -50V50M-50 ${i}H50" stroke="${s}" stroke-width=".16"/>`;
    }
    root.innerHTML = `<style>:host { position: absolute; inset: 0; overflow: hidden; } svg { display: block; width: 100%; height: 100%; }</style>
    <svg aria-hidden="true"><g transform="translate(441 79) scale(5.680)"><rect x="-50" y="-50" width="100" height="100" fill="#979da5"/>${grid}</g>
      <path d="M441.500 79V0" stroke="#2f9038"/><path d="M441 79.500H725" stroke="#9c383c"/>
      ${figure(441, 79, 0, 68, 0, 17, dense)}
      ${figure(572, 79, 24, 72, 2, 11)}
      ${figure(441, 217, 20, 60, 2, 11)}
      ${figure(572, 220, 36, 108, 2, 14)}
      ${figure(441, 357, 28, 84, 2, 13)}</svg>`;
  }
});

customElements.define('view-note', class extends HTMLElement {
  constructor() {
    super();
    this.attachShadow({ mode: 'open' }).innerHTML = `<style>
      :host { position: absolute; display: block; white-space: nowrap; color: #fafbfc; font: 13px/18px "Noto Sans", sans-serif; }
      :host(.cn) { font: 12px/17px "Noto Sans CJK SC", sans-serif; }
    </style><slot></slot>`;
  }
});

customElements.define('view-tab', class extends HTMLElement {
  constructor() {
    super();
    this.attachShadow({ mode: 'open' }).innerHTML = `<style>
      :host { display: block; }
      button { all: unset; display: flex; align-items: center; gap: 4px; height: 11px; padding: 0 2px 0 5px; background: #a0b6cf; font: bold 8px/11px "Open Sans", sans-serif; color: #101418; }
      i { display: flex; align-items: center; height: 9px; border-left: 1px solid #222; padding-left: 2px; }
      i::after { content: ""; border: 2px solid transparent; border-top: 3px solid #111; border-bottom: 0; }
    </style><button><slot></slot><i></i></button>`;
  }
});

customElements.define('axis-mark', class extends HTMLElement {
  constructor() {
    super();
    this.attachShadow({ mode: 'open' }).innerHTML = `<style>
      :host { position: absolute; left: 18px; bottom: 18px; width: 28px; height: 28px; display: block; }
      svg { display: block; width: 100%; }
      text { font: 8px "Liberation Sans", sans-serif; }
    </style><svg viewBox="0 0 28 28"><path d="M3.500 22V4" stroke="#3f5fd0"/><path d="M3 22.500H20" stroke="#35a85c"/><text x="4" y="6" fill="#3048c8">z</text><text x="22" y="22" fill="#2aa04c">y</text></svg>`;
  }
});

/* ---------- curvature graph dialog ---------- */
customElements.define('curvature-dialog', class extends HTMLElement {
  constructor() {
    super();
    this.attachShadow({ mode: 'open' }).innerHTML = `<style>
      :host { position: absolute; display: block; box-sizing: border-box; width: 83px; padding: 0 5px 4px 4px; background: #9cb4d2; }
      * { box-sizing: border-box; }
      header { display: flex; align-items: center; justify-content: space-between; height: 17px; }
      h2 { margin: 0; font: inherit; }
      button, input { font: inherit; color: inherit; margin: 0; border-radius: 0; }
      .close { all: unset; width: 8px; height: 8px; margin-right: 1px; border-radius: 50%; background: #d9e1ec; }
      .close svg { display: block; }
      form { display: flex; flex-direction: column; height: 192px; padding: 1px 0 2px 1px; background: #ebecf1; }
      .cap { display: flex; align-items: center; gap: 4px; height: 12px; padding-right: 3px; white-space: nowrap; }
      .cap::after { content: ""; flex: 1; height: 1px; background: #d0d3d9; }
      .gap1 { margin-top: 1px; } .gap3 { margin-top: 3px; } .gap4 { margin-top: 4px; } .gap6 { margin-top: 6px; }
      .row { display: flex; align-items: center; padding-left: 6px; }
      .num { width: 31px; height: 16px; padding: 0 2px; border: 1px solid #aab0b8; background: #fff; font: 9px/12px "Noto Sans", sans-serif; outline: 0; }
      .hot { border-color: #5a9fe0; }
      .num::selection { background: #0078d7; color: #fff; }
      .spin { display: flex; margin-left: 4px; }
      .spin button { display: grid; place-items: center; width: 13px; height: 13px; padding: 0; border: 1px solid #c4c7cc; background: #eeeff1; }
      .swatch { height: 15px; flex: 1; margin-right: 6px; padding: 0; border: 1px solid #c4c7cb; background: #fff; }
      label { display: flex; align-items: center; gap: 2px; width: 30px; }
      input[type=checkbox] { appearance: none; display: grid; place-items: center; width: 8px; height: 8px; border: 1px solid #444; background: #fff; }
      input:checked::after { content: ""; width: 4px; height: 2px; border: solid #333; border-width: 0 0 1px 1px; transform: rotate(-45deg); }
      .uv { margin-right: 1px; height: 13px; border: 2px solid #c9ccd1; }
      .u { background: #9c2a2a; } .v { background: #e24343; }
      hr { width: 67px; height: 1px; margin: 6px 0 6px 6px; border: 0; background: #cdd0d6; }
      .act { width: 61px; height: 17px; margin-left: 6px; padding: 0; border: 1px solid #b6b9be; background: #e2e3e5; line-height: 13px; font-size: 7px; }
      .act.main { border-color: #0078d7; margin-bottom: 3px; }
    </style>
    <header><h2>曲率图形</h2><button class="close" aria-label="close"><svg viewBox="0 0 8 8" width="8" height="8"><path d="M3 3L5 5M5 3L3 5" stroke="#9cb4d2"/></svg></button></header>
    <form onsubmit="return false">
      <div class="cap"><span id="s">显示缩放比</span></div>
      <div class="row"><input class="num hot" id="scale" aria-labelledby="s" value="116"><span class="spin"><button type="button" aria-label="less"><svg width="3" height="4"><path d="M3 0V4L0 2Z"/></svg></button><button type="button" aria-label="more"><svg width="3" height="4"><path d="M0 0V4L3 2Z"/></svg></button></span></div>
      <div class="cap gap3"><span id="d">密度</span></div>
      <div class="row"><input class="num" aria-labelledby="d" value="2"><span class="spin"><button type="button" aria-label="less"><svg width="3" height="4"><path d="M3 0V4L0 2Z"/></svg></button><button type="button" aria-label="more"><svg width="3" height="4"><path d="M0 0V4L3 2Z"/></svg></button></span></div>
      <div class="cap gap1"><span id="c">曲线指示线</span></div>
      <div class="row"><button type="button" class="swatch" aria-labelledby="c"></button></div>
      <div class="cap gap6"><span>曲面指示线</span></div>
      <div class="row gap4"><label><input type="checkbox" checked>U:</label><button type="button" class="swatch uv u" aria-label="U"></button></div>
      <div class="row gap4"><label><input type="checkbox">V:</label><button type="button" class="swatch uv v" aria-label="V"></button></div>
      <hr>
      <button type="button" class="act main">新增物件</button>
      <button type="button" class="act">移除物件</button>
    </form>`;
  }
  connectedCallback() {
    const field = this.shadowRoot.getElementById('scale');
    field.focus();
    field.select();
  }
});

customElements.define('modeling-desktop', class extends HTMLElement {
  constructor() {
    super();
    this.attachShadow({ mode: 'open' }).innerHTML = `<style>
      :host { display: block; position: relative; height: 100%; overflow: hidden; }
      .top { display: flex; position: relative; z-index: 1; }
    </style><div class="top"><slot name="tab"></slot></div><slot></slot>`;
  }
});
</script>
</body>
</html>
